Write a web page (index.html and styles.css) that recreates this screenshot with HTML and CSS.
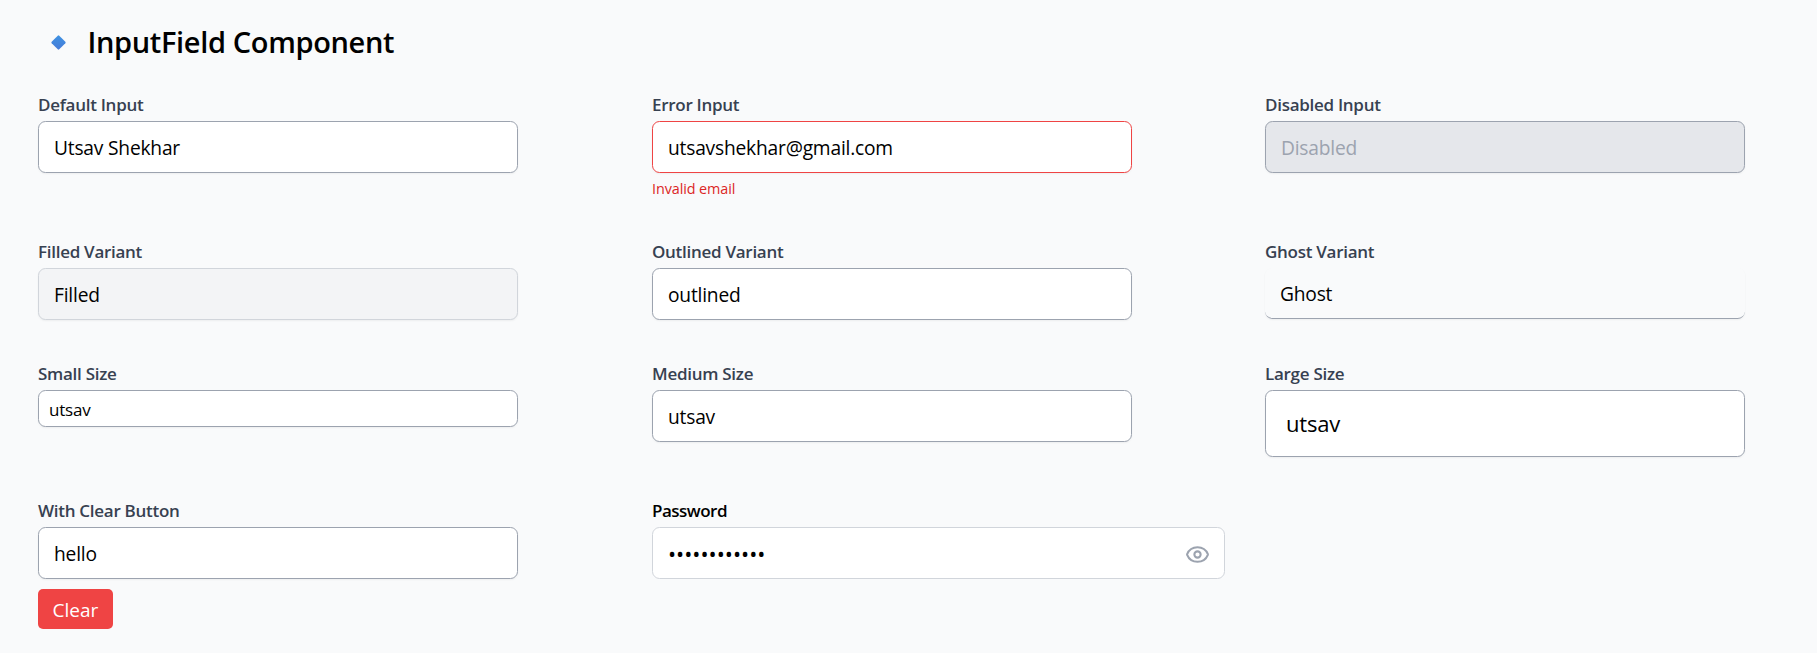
FILE: index.html
```html
<!DOCTYPE html>
<html lang="en">
<head>
<meta charset="utf-8">
<title>InputField Component</title>
<link rel="stylesheet" href="styles.css">
</head>
<body>
<main class="page">
  <h1 class="title">
    <svg class="diamond" viewBox="0 0 16 16" aria-hidden="true"><defs><linearGradient id="blue" x1="0" y1="0" x2="0" y2="1"><stop offset="0" stop-color="#3e92e2"/><stop offset="1" stop-color="#477bd8"/></linearGradient></defs><path d="M7.2 .7Q8 0 8.8 .7L15.3 7.2Q16 8 15.3 8.8L8.8 15.3Q8 16 7.2 15.3L.7 8.8Q0 8 .7 7.2Z" fill="url(#blue)"/></svg>
    <span class="title-text">InputField Component</span>
  </h1>
  <div class="grid">
    <div class="field"><label class="label">Default Input</label><input class="input" value="Utsav Shekhar"></div>
    <div class="field"><label class="label">Error Input</label><input class="input invalid" value="utsavshekhar@gmail.com"><p class="error">Invalid email</p></div>
    <div class="field"><label class="label">Disabled Input</label><input class="input disabled" placeholder="Disabled" disabled></div>

    <div class="field"><label class="label">Filled Variant</label><input class="input filled" value="Filled"></div>
    <div class="field"><label class="label">Outlined Variant</label><input class="input" value="outlined"></div>
    <div class="field"><label class="label">Ghost Variant</label><input class="input ghost" value="Ghost"></div>

    <div class="field"><label class="label">Small Size</label><input class="input small" value="utsav"></div>
    <div class="field"><label class="label">Medium Size</label><input class="input" value="utsav"></div>
    <div class="field"><label class="label">Large Size</label><input class="input large" value="utsav"></div>

    <div class="field"><label class="label">With Clear Button</label><input class="input" value="hello"><button class="clear">Clear</button></div>
    <div class="field"><label class="label dark">Password</label>
      <div class="password"><span class="dots">••••••••••••</span>
        <svg class="eye" viewBox="0 0 24 24" fill="none" stroke="currentColor" stroke-width="2" stroke-linecap="round" stroke-linejoin="round"><path d="M2.06 12.35a1 1 0 0 1 0-.7 10.75 10.75 0 0 1 19.88 0 1 1 0 0 1 0 .7 10.75 10.75 0 0 1-19.88 0"/><circle cx="12" cy="12" r="3"/></svg>
      </div>
    </div>
  </div>
</main>
</body>
</html>
```
FILE: styles.css
```css
* { box-sizing: border-box; }
body {
  margin: 0;
  background: #f9fafb;
  color: #000;
  font-family: "Segoe UI", "Open Sans", "Noto Sans", sans-serif;
}
.page { padding: 22px 38px 0; }
.title {
  display: flex;
  align-items: center;
  height: 40px;
  margin: 0 0 30px;
  padding-left: 13px;
  font-size: 29px;
  font-weight: 600;
  line-height: 40px;
}
.diamond { width: 15px; height: 15px; margin-right: 21.5px; }
.title-text { letter-spacing: -0.35px; }
.grid {
  display: grid;
  grid-template-columns: 614px 613px 480px;
  grid-template-rows: 147px 122px 137px auto;
}
.field { display: flex; flex-direction: column; align-items: flex-start; }
.label {
  height: 25px;
  margin-bottom: 4px;
  color: #374151;
  font-size: 17px;
  font-weight: 600;
  line-height: 25px;
  letter-spacing: -0.28px;
}
.label.dark { color: #000; letter-spacing: -0.5px; }
.input {
  width: 480px;
  height: 52px;
  padding: 1px 15px 0;
  border: 1px solid #9ca3af;
  border-radius: 7.5px;
  background: #fff;
  color: #000;
  font-family: inherit;
  font-size: 19.2px;
  letter-spacing: -0.2px;
  box-shadow: 0 1px 2px rgba(0, 0, 0, 0.05);
  outline: none;
}
.invalid { border-color: #ef4444; }
.disabled { background: #e5e7eb; }
.disabled::placeholder { color: #9ca3af; opacity: 1; }
.filled { background: #f3f4f6; border-color: #d1d5db; }
.ghost {
  height: 51px;
  border-width: 0 0 1px;
  background: transparent;
}
.small { height: 37px; padding: 2px 10px 0; font-size: 17px; }
.large { height: 67px; padding: 0 20px 2px; font-size: 22px; }
.error {
  margin: 6px 0 0;
  color: #dc2626;
  font-size: 14.4px;
  line-height: 20px;
  letter-spacing: -0.1px;
}
.clear {
  width: 75px;
  height: 40px;
  margin-top: 10px;
  padding: 2px 0 0;
  border: 0;
  border-radius: 5px;
  background: #ef4444;
  color: #fff;
  font-family: inherit;
  font-size: 19px;
}
.password {
  display: flex;
  align-items: center;
  justify-content: space-between;
  width: 573px;
  height: 52px;
  padding: 2px 14.5px 0 15px;
  border: 1px solid #d1d5db;
  border-radius: 7.5px;
  background: #fff;
}
.dots { font-size: 21.6px; line-height: 28px; }
.eye { width: 25px; height: 25px; color: #9ca3af; }
```
